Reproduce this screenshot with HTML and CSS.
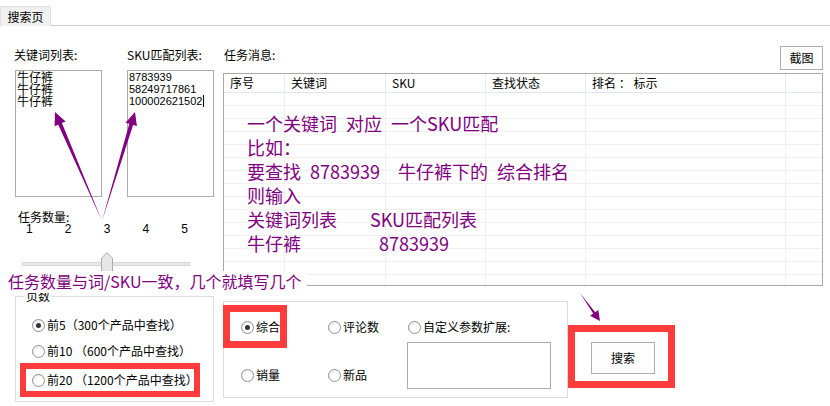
FILE: index.html
```html
<!DOCTYPE html>
<html lang="zh-CN">
<head>
    <meta charset="UTF-8">
    <title>搜索页</title>
    <link rel="stylesheet" href="styles.css">
</head>
<body>
    <div class="tab-bar">
        <div class="tab">搜索页</div>
    </div>

    <div class="top">
        <div class="left-panel">
            <div class="lists">
                <div class="list-col">
                    <div class="field-label">关键词列表:</div>
                    <div class="textbox keywords">牛仔裤<br>牛仔裤<br>牛仔裤</div>
                </div>
                <div class="list-col">
                    <div class="field-label">SKU匹配列表:</div>
                    <div class="textbox skus">8783939<br>58249717861<br>100002621502<span class="caret"></span></div>
                </div>
            </div>
            <div class="task-count">
                <div class="count-label">任务数量:</div>
                <div class="ticks"><span>1</span><span>2</span><span>3</span><span>4</span><span>5</span></div>
                <div class="slider">
                    <div class="track"></div>
                    <svg class="thumb" width="12" height="22" viewBox="0 0 12 22">
                        <path d="M0.5 21.5V6L6 0.7L11.5 6V21.5Z" fill="#e6e6e6" stroke="#adadad"/>
                    </svg>
                </div>
            </div>
        </div>

        <div class="task-panel">
            <div class="task-head">
                <span class="field-label">任务消息:</span>
                <button class="btn shot">截图</button>
            </div>
            <div class="list-view">
                <table>
                    <colgroup>
                        <col class="c-no"><col class="c-key"><col class="c-sku"><col class="c-state"><col class="c-rank"><col>
                    </colgroup>
                    <tr><th>序号</th><th>关键词</th><th>SKU</th><th>查找状态</th><th>排名 ： 标示</th><th></th></tr>
                    <tr><td></td><td></td><td></td><td></td><td></td><td></td></tr>
                    <tr><td></td><td></td><td></td><td></td><td></td><td></td></tr>
                    <tr><td></td><td></td><td></td><td></td><td></td><td></td></tr>
                    <tr><td></td><td></td><td></td><td></td><td></td><td></td></tr>
                    <tr><td></td><td></td><td></td><td></td><td></td><td></td></tr>
                    <tr><td></td><td></td><td></td><td></td><td></td><td></td></tr>
                    <tr><td></td><td></td><td></td><td></td><td></td><td></td></tr>
                    <tr><td></td><td></td><td></td><td></td><td></td><td></td></tr>
                    <tr><td></td><td></td><td></td><td></td><td></td><td></td></tr>
                    <tr><td></td><td></td><td></td><td></td><td></td><td></td></tr>
                    <tr><td></td><td></td><td></td><td></td><td></td><td></td></tr>
                    <tr><td></td><td></td><td></td><td></td><td></td><td></td></tr>
                    <tr><td></td><td></td><td></td><td></td><td></td><td></td></tr>
                    <tr><td></td><td></td><td></td><td></td><td></td><td></td></tr>
                    <tr class="filler"><td></td><td></td><td></td><td></td><td></td><td></td></tr>
                </table>

                <!-- usage hint drawn over the empty list -->
                <div class="hint">
                    <div>一个关键词 对应 一个SKU匹配</div>
                    <div>比如：</div>
                    <div>要查找 8783939  牛仔裤下的 综合排名</div>
                    <div>则输入</div>
                    <div><span class="w-head">关键词列表</span>SKU匹配列表</div>
                    <div><span class="w-item">牛仔裤</span>8783939</div>
                </div>
            </div>
        </div>
    </div>

    <div class="bottom">
        <fieldset class="pages">
            <legend>页数</legend>
            <div class="page-opts">
                <label class="opt"><span class="radio checked"></span>前5（300个产品中查找）</label>
                <label class="opt"><span class="radio"></span>前10 （600个产品中查找）</label>
                <label class="opt last"><span class="radio"></span>前20 （1200个产品中查找）</label>
            </div>
        </fieldset>

        <div class="sort-group">
            <div class="sort-col first">
                <label class="opt"><span class="radio checked"></span>综合</label>
                <label class="opt"><span class="radio"></span>销量</label>
            </div>
            <div class="sort-col second">
                <label class="opt"><span class="radio"></span>评论数</label>
                <label class="opt"><span class="radio"></span>新品</label>
            </div>
            <div class="custom">
                <label class="opt"><span class="radio"></span>自定义参数扩展:</label>
                <div class="textbox params"></div>
            </div>
        </div>

        <button class="btn search">搜索</button>
    </div>

    <div class="note">任务数量与词/SKU一致，几个就填写几个</div>

    <!-- annotation arrows and red boxes -->
    <svg class="marks" width="830" height="406" viewBox="0 0 830 406">
        <g fill="#800080">
            <polygon points="102,221 58.3,124.7 54.6,126.3 55,112 65.6,121.5 61.9,123.1"/>
            <polygon points="102,221 129.3,123.8 125.5,122.7 135,112 136.9,126.1 133.1,125"/>
            <polygon points="580,293 595.2,312.2 598.3,310 600,321 590.1,315.8 593.2,313.6"/>
        </g>
        <g fill="none" stroke="#fe3c3c">
            <rect x="23" y="366" width="174" height="28" stroke-width="6"/>
            <rect x="226.5" y="308.5" width="57" height="36" stroke-width="7"/>
            <rect x="571.5" y="328.5" width="100" height="56" stroke-width="7"/>
        </g>
    </svg>
</body>
</html>
```

FILE: styles.css
```css
* {
    margin: 0;
    padding: 0;
    box-sizing: border-box;
}

body {
    width: 830px;
    height: 406px;
    overflow: hidden;
    position: relative;
    background: #fff;
    color: #000;
    font-family: "Noto Sans CJK SC", sans-serif;
    font-size: 12px;
    line-height: 14px;
}

/* tab strip */
.tab-bar {
    height: 26px;
    display: flex;
    align-items: flex-end;
    border-bottom: 1px solid #c9c9c9;
}

.tab {
    width: 51px;
    height: 20px;
    margin-bottom: -1px;
    background: #f0f0f0;
    border: 1px solid #dedede;
    border-bottom: none;
    text-align: center;
    line-height: 19px;
}

/* upper area */
.top {
    display: flex;
    padding: 20px 7px 0 14px;
}

.left-panel {
    width: 209px;
}

.lists {
    display: flex;
    gap: 24px;
}

.list-col {
    width: 89px;
}

.field-label {
    height: 24px;
    line-height: 18px;
}

.textbox {
    border: 1px solid #ababab;
    background: #fff;
}

.keywords,
.skus {
    width: 87px;
    height: 127px;
    padding: 0 1px;
    line-height: 12px;
}

.keywords {
    margin-left: 1px;
}

.skus {
    font-family: "Liberation Sans", sans-serif;
    font-size: 11px;
}

.caret {
    display: inline-block;
    width: 1px;
    height: 12px;
    margin-left: 1px;
    background: #000;
    vertical-align: top;
}

.task-count {
    padding: 14px 0 0 4px;
}

.count-label {
    line-height: 12px;
}

.ticks {
    display: flex;
    justify-content: space-between;
    width: 162px;
    margin-left: 8px;
    line-height: 12px;
    font-family: "Liberation Sans", sans-serif;
}

.slider {
    position: relative;
    width: 168px;
    height: 22px;
    margin: 17px 0 0 4px;
}

.track {
    position: relative;
    top: 10px;
    height: 4px;
    background: #e7e7e7;
    border: 1px solid #d6d6d6;
}

.thumb {
    position: absolute;
    left: 79px;
    top: 0;
}

.task-panel {
    flex: 1;
}

.task-head {
    display: flex;
    justify-content: space-between;
    align-items: flex-start;
    height: 27px;
    padding-left: 1px;
}

.btn {
    background: #fdfdfd;
    border: 1px solid #adadad;
    color: #000;
    font: inherit;
}

.shot {
    width: 43px;
    height: 24px;
}

/* message list */
.list-view {
    position: relative;
    height: 213px;
    border: 1px solid #a9a9a9;
    overflow: hidden;
}

.list-view table {
    width: 100%;
    table-layout: fixed;
    border-collapse: separate;
    border-spacing: 0;
}

.c-no { width: 61px; }
.c-key { width: 101px; }
.c-sku { width: 100px; }
.c-state { width: 100px; }
.c-rank { width: 200px; }

.list-view th,
.list-view td {
    box-sizing: content-box;
    padding: 0 0 0 6px;
    text-align: left;
    font-weight: normal;
}

.list-view th {
    height: 18px;
    line-height: 18px;
    background: #fff;
    border-right: 1px solid #e3ebf6;
    border-bottom: 1px solid #dce6f4;
    white-space: nowrap;
}

.list-view td {
    height: 12px;
    border-right: 1px solid #f0f0f0;
    border-bottom: 1px solid #f0f0f0;
}

.list-view th:last-child,
.list-view td:last-child {
    border-right: none;
}

.hint {
    position: absolute;
    left: 23px;
    top: 37px;
    color: #800080;
    font-size: 18px;
    line-height: 24px;
    word-spacing: 5px;
}

.hint div {
    white-space: pre;
}

.w-head,
.w-item {
    display: inline-block;
}

.w-head { width: 123px; }
.w-item { width: 132px; }

/* lower area */
.bottom {
    display: flex;
    align-items: flex-start;
    padding-left: 15px;
    margin-top: 3px;
}

.opt {
    display: flex;
    align-items: center;
    height: 20px;
    white-space: nowrap;
}

.radio {
    position: relative;
    width: 13px;
    height: 13px;
    margin-right: 2px;
    border: 1px solid #8f8f8f;
    border-radius: 50%;
    background: radial-gradient(circle at 60% 65%, #fff 40%, #e2e2e2 100%);
}

.radio.checked::after {
    content: "";
    position: absolute;
    left: 3px;
    top: 3px;
    width: 5px;
    height: 5px;
    border-radius: 50%;
    background: #333;
}

.pages {
    width: 199px;
    height: 113px;
    border: 1px solid #dcdcdc;
    padding: 0 0 0 16px;
}

.pages legend {
    margin-left: -8px;
    padding: 0 2px;
    line-height: 14px;
}

.page-opts {
    display: flex;
    flex-direction: column;
    gap: 6px;
    padding-top: 12px;
}

.page-opts .last {
    margin-top: 3px;
}

.sort-group {
    display: flex;
    width: 345px;
    height: 97px;
    margin: 12px 0 0 9px;
    padding: 15px 0 0 17px;
    border: 1px solid #dcdcdc;
}

.sort-col {
    display: flex;
    flex-direction: column;
    gap: 28px;
}

.sort-col.first { width: 87px; }
.sort-col.second { width: 80px; }

.params {
    width: 144px;
    height: 47px;
    margin: 5px 0 0 -1px;
}

.search {
    width: 64px;
    height: 32px;
    margin: 53px 0 0 23px;
}

.note {
    position: absolute;
    left: 4px;
    top: 271px;
    height: 22px;
    padding: 0 6px 0 4px;
    background: #fff;
    color: #800080;
    font-size: 16px;
    line-height: 20px;
    white-space: nowrap;
}

.marks {
    position: absolute;
    left: 0;
    top: 0;
    pointer-events: none;
}
```
